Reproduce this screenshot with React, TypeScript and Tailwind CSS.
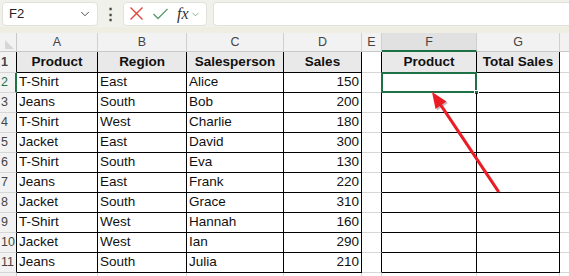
import { ChevronDown } from "lucide-react"

const cols = [
  { key: "A", w: "w-[81px]" },
  { key: "B", w: "w-[89px]" },
  { key: "C", w: "w-[97px]" },
  { key: "D", w: "w-[78px]" },
  { key: "E", w: "w-[20px]" },
  { key: "F", w: "w-[95px]" },
  { key: "G", w: "w-[83px]" },
]

const rows = [
  ["T-Shirt", "East", "Alice", "150"],
  ["Jeans", "South", "Bob", "200"],
  ["T-Shirt", "West", "Charlie", "180"],
  ["Jacket", "East", "David", "300"],
  ["T-Shirt", "South", "Eva", "130"],
  ["Jeans", "East", "Frank", "220"],
  ["Jacket", "South", "Grace", "310"],
  ["T-Shirt", "West", "Hannah", "160"],
  ["Jacket", "West", "Ian", "290"],
  ["Jeans", "South", "Julia", "210"],
]

function Toolbar() {
  return (
    <div className="flex h-[27px] items-center bg-[#f0f1ea] pl-[2px]">
      <div className="flex h-[24px] w-[96px] items-center justify-between rounded-[4px] border border-[#e2e2dc] bg-white pl-[6px] pr-[5px] text-[13px] text-[#222]">
        <span>F2</span>
        <ChevronDown size={14} strokeWidth={1.6} className="text-[#444]" />
      </div>
      <div className="flex w-[25px] justify-center text-[15px] font-bold leading-none text-[#444]">⋮</div>
      <div className="flex h-[24px] w-[84px] items-center gap-[8px] rounded-[4px] border border-[#e2e2dc] bg-white pl-[5px]">
        <svg width="15" height="15" viewBox="0 0 15 15">
          <path d="M1.5 1.5 L13.5 13.5 M13.5 1.5 L1.5 13.5" stroke="#e0453a" strokeWidth="1.4" fill="none" />
        </svg>
        <svg width="17" height="15" viewBox="0 0 17 15">
          <path d="M1.5 8 L6 12.5 L15.5 3" stroke="#5e9d6e" strokeWidth="1.4" fill="none" />
        </svg>
        <div className="flex items-center gap-[1px]">
          <span className="font-['Liberation_Serif',serif] text-[16px] italic leading-none text-[#333]">fx</span>
          <ChevronDown size={11} strokeWidth={1.6} className="mt-[2px] text-[#5e9d6e]" />
        </div>
      </div>
      <div className="ml-[6px] h-[24px] flex-1 rounded-l-[4px] border border-r-0 border-[#e2e2dc] bg-white" />
    </div>
  )
}

function ColumnHeader() {
  return (
    <div className="flex h-[19px] bg-[#f2f2f2] text-[12.5px] text-[#444]">
      <div className="relative w-[17px] shrink-0 border-r border-b border-[#c8c8c8]">
        <div className="absolute right-[2px] bottom-[2px] h-0 w-0 border-t-[9px] border-l-[9px] border-t-transparent border-l-[#d6d6d6]" />
      </div>
      {cols.map((c) => (
        <div
          key={c.key}
          className={`${c.w} flex shrink-0 items-center justify-center border-r border-[#d0d0d0] ${
            c.key === "F" ? "border-b-2 border-b-[#1e7145] bg-[#e1e1e1] pt-[2px]" : "border-b border-b-[#c8c8c8]"
          }`}
        >
          {c.key}
        </div>
      ))}
      <div className="flex-1 border-b border-[#c8c8c8]" />
    </div>
  )
}

function RowHead({ n, active }: { n: number; active?: boolean }) {
  return (
    <div
      className={`flex w-[17px] shrink-0 items-center border-b border-[#d6d6d6] bg-[#f2f2f2] pl-[1px] text-[12.5px] ${
        active ? "border-r-2 border-r-[#1e7145] text-[#1e7145]" : "border-r border-r-black text-[#444]"
      }`}
    >
      {n}
    </div>
  )
}

function HeaderRow() {
  const labels = ["Product", "Region", "Salesperson", "Sales"]
  return (
    <div className="flex h-[21px] text-[13.5px] font-bold text-[#111]">
      <RowHead n={1} />
      {labels.map((l, i) => (
        <div
          key={l}
          className={`${cols[i].w} flex shrink-0 items-center justify-center border-r border-b border-black bg-[#e9e9e9]`}
        >
          {l}
        </div>
      ))}
      <div className="w-[20px] shrink-0 border-r border-r-black border-b border-b-[#d6d6d6]" />
      <div className="flex w-[95px] shrink-0 items-center justify-center border-r border-b border-black bg-[#e9e9e9]">
        Product
      </div>
      <div className="flex w-[83px] shrink-0 items-center justify-center border-r border-b border-black bg-[#e9e9e9]">
        Total Sales
      </div>
      <div className="flex-1 border-b border-[#d6d6d6]" />
    </div>
  )
}

function DataRow({ n, data }: { n: number; data: string[] }) {
  const active = n === 2
  return (
    <div className="flex h-[20px] text-[13.5px] text-[#111]">
      <RowHead n={n} active={active} />
      {data.map((v, i) => (
        <div
          key={i}
          className={`${cols[i].w} flex shrink-0 items-center border-r border-b border-black px-[2px] ${
            i === 3 ? "justify-end" : ""
          }`}
        >
          {v}
        </div>
      ))}
      <div className="w-[20px] shrink-0 border-r border-r-black border-b border-b-[#d6d6d6]" />
      <div className="relative w-[95px] shrink-0 border-r border-b border-black">
        {active && (
          <div className="absolute -top-px -left-px h-[21px] w-[96px] border-2 border-[#1e7145]">
            <div className="absolute -right-[4px] -bottom-[4px] h-[5px] w-[5px] border border-white bg-[#1e7145]" />
          </div>
        )}
      </div>
      <div className="w-[83px] shrink-0 border-r border-b border-black" />
      <div className="flex-1 border-b border-[#d6d6d6]" />
    </div>
  )
}

export default function App() {
  return (
    <div className="relative h-[276px] w-[569px] overflow-hidden bg-white font-['Liberation_Sans',Arial,sans-serif]">
      <Toolbar />
      <div className="h-[6px] bg-[#eeeee2]" />
      <ColumnHeader />
      <HeaderRow />
      {rows.map((r, i) => (
        <DataRow key={i} n={i + 2} data={r} />
      ))}
      <div className="flex h-[20px]">
        <div className="w-[17px] shrink-0 border-r border-[#c8c8c8] bg-[#f2f2f2]" />
        {cols.map((c) => (
          <div key={c.key} className={`${c.w} shrink-0 border-r border-[#d6d6d6]`} />
        ))}
      </div>
      <svg className="pointer-events-none absolute inset-0" width="569" height="276" viewBox="0 0 569 276">
        <g opacity="0.25" transform="translate(1.5 1.5)">
          <line x1="498" y1="191" x2="440" y2="104" stroke="#000" strokeWidth="3" />
          <polygon points="432,92 446.5,101.5 435.5,109" fill="#000" />
        </g>
        <line x1="498" y1="191" x2="440" y2="104" stroke="#ec1c24" strokeWidth="3" strokeLinecap="round" />
        <polygon points="432,92 446.5,101.5 435.5,109" fill="#ec1c24" />
      </svg>
    </div>
  )
}
